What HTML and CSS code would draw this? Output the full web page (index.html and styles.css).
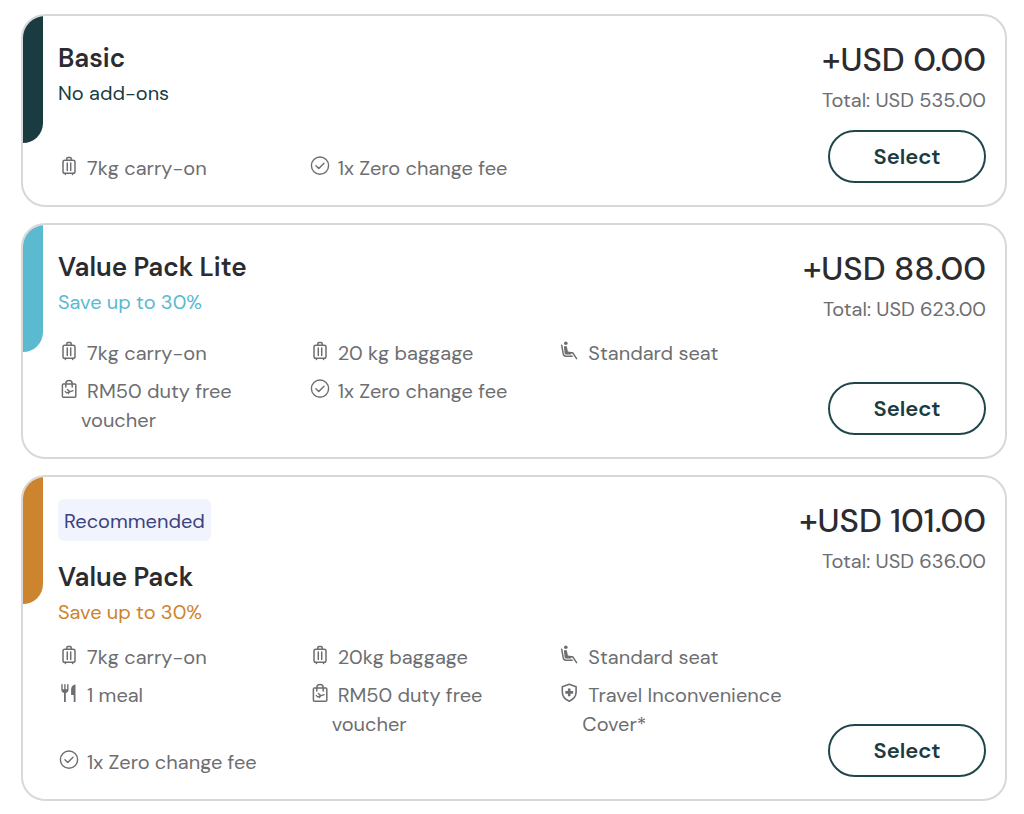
FILE: index.html
```html
<!DOCTYPE html>
<html lang="en">
<head>
<meta charset="utf-8">
<meta name="viewport" content="width=device-width, initial-scale=1">
<title>Choose your bundle</title>
<link rel="stylesheet" href="styles.css">
</head>
<body>
<svg class="sprite" aria-hidden="true">
  <symbol id="bag" viewBox="0 0 22 22">
    <g fill="none" stroke="currentColor" stroke-width="1.5" stroke-linecap="round" stroke-linejoin="round">
      <rect x="5" y="5.2" width="12" height="13" rx="1.8"/>
      <path d="M8.8 5V3.4a1 1 0 0 1 1-1h2.4a1 1 0 0 1 1 1V5M9.3 8v7.6M12.7 8v7.6M7.4 18.6v.8M14.6 18.6v.8"/>
    </g>
  </symbol>
  <symbol id="check" viewBox="0 0 22 22">
    <g fill="none" stroke="currentColor" stroke-width="1.4" stroke-linecap="round" stroke-linejoin="round">
      <circle cx="11" cy="10.6" r="8.6"/>
      <path d="M6.9 10.8l2.9 2.8 5.2-5.3"/>
    </g>
  </symbol>
  <symbol id="seat" viewBox="0 0 22 22">
    <circle cx="6.8" cy="3.3" r="1.8" fill="currentColor"/>
    <path d="M4.9 6.2h2.9l1.1 5.3 3.4.4v2.6H7.3c-1 0-1.5-.6-1.7-1.5z" fill="currentColor"/>
    <path d="M2.7 5.2l1.5 8.5c.3 1.7 1.2 2.6 2.8 2.6h6.2M12.4 12.8h1.4l3.8 5.8" fill="none" stroke="currentColor" stroke-width="1.5" stroke-linecap="round" stroke-linejoin="round"/>
  </symbol>
  <symbol id="duty" viewBox="0 0 22 22">
    <g fill="none" stroke="currentColor" stroke-width="1.5" stroke-linecap="round" stroke-linejoin="round">
      <rect x="4.4" y="6.1" width="13.4" height="13.2" rx="1"/>
      <path d="M7.8 9V5.6a3.2 3.2 0 0 1 6.4 0V9"/>
      <path d="M7.2 13.4l1.4 1.5 6.5-2.2M9.4 11.5l2.3 2.1-1.3 2" stroke-width="1.3"/>
    </g>
  </symbol>
  <symbol id="meal" viewBox="0 0 22 22">
    <path d="M4 2.6v5.2c0 1.7 1 2.4 2.9 2.4s2.9-.7 2.9-2.4V2.6M6.9 2.6v6" fill="none" stroke="currentColor" stroke-width="1.4" stroke-linecap="round"/>
    <path d="M4.2 7.2h5.4c0 2-.7 2.8-1.8 3.2V20H6v-9.6c-1-.4-1.8-1.2-1.8-3.2zM17.5 2.4V20h-1.8v-7h-2.6V7.2c0-2.7 1.7-4.6 4.4-4.8z" fill="currentColor"/>
  </symbol>
  <symbol id="shield" viewBox="0 0 22 22">
    <path d="M10.2 2.2l6.9 2.5v5.4c0 4.1-2.6 7.3-6.9 9.2-4.3-1.9-6.9-5.1-6.9-9.2V4.7z" fill="none" stroke="currentColor" stroke-width="1.6" stroke-linejoin="round"/>
    <path d="M8.9 6.5h2.6v2.6h2.6v2.6h-2.6v2.6H8.9v-2.6H6.3V9.1h2.6z" fill="currentColor"/>
  </symbol>
</svg>

<main class="bundles">
  <article class="card card--basic">
    <div class="info">
      <header>
        <h2 class="title">Basic</h2>
        <p class="note">No add-ons</p>
      </header>
      <ul class="features">
        <li><svg><use href="#bag"/></svg><span>7kg carry-on</span></li>
        <li><svg><use href="#check"/></svg><span>1x Zero change fee</span></li>
      </ul>
    </div>
    <div class="side">
      <p class="price">+USD 0.00</p>
      <p class="total">Total: USD 535.00</p>
      <button class="select" type="button">Select</button>
    </div>
  </article>

  <article class="card card--lite">
    <div class="info">
      <header>
        <h2 class="title">Value Pack Lite</h2>
        <p class="note">Save up to 30%</p>
      </header>
      <ul class="features">
        <li><svg><use href="#bag"/></svg><span>7kg carry-on</span></li>
        <li><svg><use href="#bag"/></svg><span>20 kg baggage</span></li>
        <li><svg><use href="#seat"/></svg><span>Standard seat</span></li>
        <li><svg><use href="#duty"/></svg><span>RM50 duty free voucher</span></li>
        <li><svg><use href="#check"/></svg><span>1x Zero change fee</span></li>
      </ul>
    </div>
    <div class="side">
      <p class="price">+USD 88.00</p>
      <p class="total">Total: USD 623.00</p>
      <button class="select" type="button">Select</button>
    </div>
  </article>

  <article class="card card--value">
    <div class="info">
      <header>
        <span class="badge">Recommended</span>
        <h2 class="title">Value Pack</h2>
        <p class="note">Save up to 30%</p>
      </header>
      <ul class="features">
        <li><svg><use href="#bag"/></svg><span>7kg carry-on</span></li>
        <li><svg><use href="#bag"/></svg><span>20kg baggage</span></li>
        <li><svg><use href="#seat"/></svg><span>Standard seat</span></li>
        <li><svg><use href="#meal"/></svg><span>1 meal</span></li>
        <li><svg><use href="#duty"/></svg><span>RM50 duty free voucher</span></li>
        <li><svg><use href="#shield"/></svg><span>Travel Inconvenience Cover*</span></li>
        <li><svg><use href="#check"/></svg><span>1x Zero change fee</span></li>
      </ul>
    </div>
    <div class="side">
      <p class="price">+USD 101.00</p>
      <p class="total">Total: USD 636.00</p>
      <button class="select" type="button">Select</button>
    </div>
  </article>
</main>
</body>
</html>
```

FILE: styles.css
```css
* {
  box-sizing: border-box;
}

body,
h2,
p,
ul {
  margin: 0;
  padding: 0;
}

body {
  background: #fff;
  color: #6d6e71;
  font-family: "DM Sans", Inter, "Open Sans", sans-serif;
  font-size: 20px;
  line-height: 29px;
}

.sprite {
  display: none;
}

.bundles {
  display: flex;
  flex-direction: column;
  gap: 16px;
  padding: 14px 17px 12px 21px;
}

.card {
  --accent: #1a3c40;
  position: relative;
  display: flex;
  gap: 16px;
  padding: 22px 19px 22px 35px;
  border: 2px solid #d8d8d8;
  border-radius: 24px;
  overflow: hidden;
}

.card::before {
  content: "";
  position: absolute;
  top: 0;
  left: 0;
  width: 20px;
  height: 127px;
  border-bottom-right-radius: 20px;
  background: var(--accent);
}

.card--lite {
  --accent: #5bb9d0;
}

.card--value {
  --accent: #cc842f;
}

.info {
  flex: 1;
  display: flex;
  flex-direction: column;
  justify-content: space-between;
  gap: 16px;
}

.card--lite .info {
  gap: 22px;
}

.badge {
  display: table;
  margin-bottom: 16px;
  padding: 2px 6px 0;
  border-radius: 6px;
  background: #f1f4fd;
  color: #3b4281;
  line-height: 40px;
}

.title {
  color: #2b2b30;
  font-size: 26px;
  font-weight: 600;
  line-height: 40px;
}

.note {
  color: var(--accent);
  line-height: 30px;
}

.features {
  display: grid;
  grid-template-columns: repeat(3, 1fr);
  row-gap: 9px;
  list-style: none;
}

.features li {
  display: flex;
  gap: 1px;
}

.features svg {
  flex: none;
  width: 22px;
  height: 22px;
  margin-top: 1px;
}

.features span {
  max-width: 204px;
  text-indent: 6px;
}

.side {
  width: 160px;
  display: flex;
  flex-direction: column;
  align-items: flex-end;
  white-space: nowrap;
}

.price {
  color: #2b2b30;
  font-size: 33px;
  font-weight: 500;
  line-height: 44px;
}

.total {
  line-height: 36px;
}

.select {
  width: 158px;
  height: 53px;
  margin-top: auto;
  border: 2px solid #1f474b;
  border-radius: 27px;
  background: #fff;
  color: #1a3c40;
  font: inherit;
  font-size: 22px;
  font-weight: 600;
  cursor: pointer;
}

.card--basic .select {
  margin-top: 12px;
}
```
